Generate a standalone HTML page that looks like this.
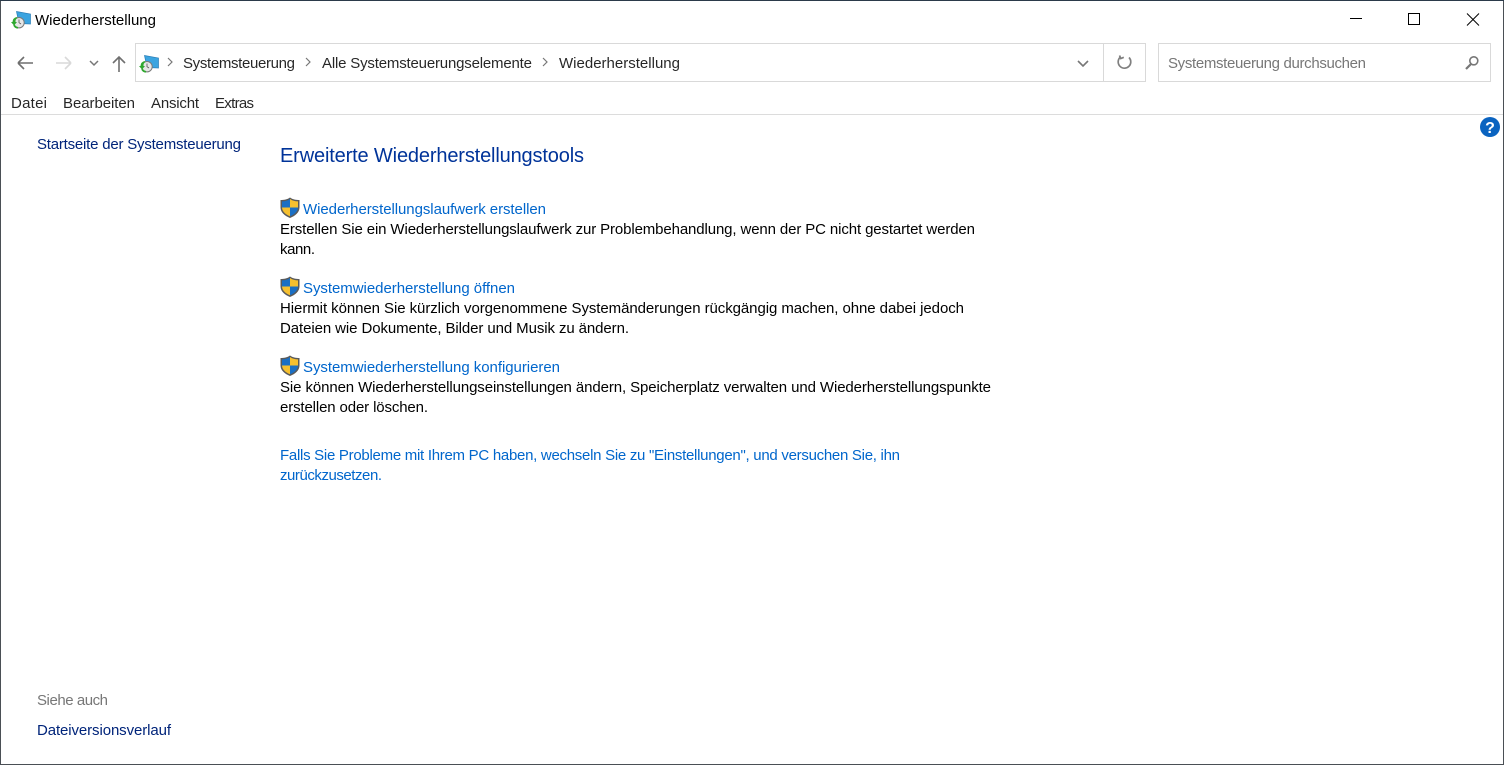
<!DOCTYPE html>
<html><head><meta charset="utf-8"><title>Wiederherstellung</title>
<style>
html,body{margin:0;padding:0;background:#fff;width:1504px;height:765px;overflow:hidden}
svg{display:block}
text{font-family:"Liberation Sans",sans-serif;font-size:15px;white-space:pre}
.k{fill:#000}.l{fill:#0066cc}.d{fill:#00247a}.g{fill:#777}
</style></head><body>
<svg width="1504" height="765" viewBox="0 0 1504 765" xmlns="http://www.w3.org/2000/svg">
<defs>
<g id="rec">
<path d="M6.500 1.500 L20.500 4 V14 L9 13.500 Z" fill="#3ba4e0" stroke="#2c7fb8" stroke-width=".7"/>
<circle cx="9" cy="12.700" r="5.200" fill="#e6e6e6" stroke="#7a7a7a"/>
<path d="M9 9.500 V12.700 L11 14" fill="none" stroke="#555" stroke-width=".8"/>
<path d="M1 12 L4 15.500 L7 12 H5.500 A4 4 0 0 1 7.500 8 L6.500 7 A5.500 5.500 0 0 0 2.500 12 Z" fill="#2fa82f"/>
<path d="M4 15 Q5 17.500 8 17.800" fill="none" stroke="#2fa82f" stroke-width="1.700"/>
</g>
<g id="sh">
<path d="M10 0.500 C7.500 2.500 4 3 .5 3 V10.500 C.5 15.500 5 19 10 21 C15 19 19.500 15.500 19.500 10.500 V3 C16 3 12.500 2.500 10 .5 Z" fill="#5a5a5a"/>
<path d="M10 2 C7.800 3.700 5 4.300 2 4.400 V10.500 H10 Z" fill="#1a6fc4"/>
<path d="M10 2 C12.200 3.700 15 4.300 18 4.400 V10.500 H10 Z" fill="#f6c02f"/>
<path d="M2 10.500 H10 V19.300 C5.700 17.500 2.200 14.700 2 10.500 Z" fill="#f6c02f"/>
<path d="M18 10.500 H10 V19.300 C14.300 17.500 17.800 14.700 18 10.500 Z" fill="#1a6fc4"/>
</g>
</defs>

<rect width="1504" height="765" fill="#fff"/>
<rect x=".5" y=".5" width="1503" height="764" fill="none" stroke="#4a4f55"/>
<rect x="0" y="0" width="1504" height="1" fill="#2b3a4a"/>

<!-- title bar -->
<use href="#rec" x="10" y="10"/>
<text x="35" y="25" class="k" textLength="121" lengthAdjust="spacing">Wiederherstellung</text>
<path d="M1350 18.500 H1362" stroke="#000" stroke-width="1"/>
<rect x="1408.500" y="13.500" width="11" height="11" fill="none" stroke="#000"/>
<path d="M1467 13.500 L1479 25.500 M1479 13.500 L1467 25.500" stroke="#000" stroke-width="1" fill="none"/>

<!-- nav -->
<path d="M18 63 H33 M18 63 L24 57 M18 63 L24 69" stroke="#6f6f6f" stroke-width="1.600" fill="none"/>
<path d="M71 63 H56 M71 63 L65 57 M71 63 L65 69" stroke="#d9d9d9" stroke-width="1.600" fill="none"/>
<path d="M90 61 L94 65 L98 61" stroke="#777" stroke-width="1.500" fill="none"/>
<path d="M119 72 V57 M113 63 L119 57 L125 63" stroke="#6f6f6f" stroke-width="1.600" fill="none"/>

<!-- address bar -->
<rect x="135.500" y="43.500" width="1010" height="38" fill="#fff" stroke="#d9d9d9"/>
<path d="M1103.500 44 V81" stroke="#d9d9d9"/>
<use href="#rec" x="138" y="54"/>
<path d="M168 58 L172 62 L168 66" stroke="#777" stroke-width="1.200" fill="none"/>
<text x="183" y="68" class="k" fill-opacity=".85" textLength="112" lengthAdjust="spacing">Systemsteuerung</text>
<path d="M306 58 L310 62 L306 66" stroke="#777" stroke-width="1.200" fill="none"/>
<text x="322" y="68" class="k" fill-opacity=".85" textLength="210" lengthAdjust="spacing">Alle Systemsteuerungselemente</text>
<path d="M543 58 L547 62 L543 66" stroke="#777" stroke-width="1.200" fill="none"/>
<text x="559" y="68" class="k" fill-opacity=".85" textLength="121" lengthAdjust="spacing">Wiederherstellung</text>
<path d="M1078 61 L1083 66 L1088 61" stroke="#777" stroke-width="1.600" fill="none"/>
<path d="M1120.500 57 A6.300 6.300 0 1 0 1129 57.500 M1119.500 55.500 L1120.800 58.500 L1123.800 57.300" fill="none" stroke="#808080" stroke-width="1.700"/>

<!-- search -->
<rect x="1158.500" y="43.500" width="332" height="38" fill="#fff" stroke="#d9d9d9"/>
<text x="1168" y="68" class="g" textLength="198" lengthAdjust="spacing">Systemsteuerung durchsuchen</text>
<circle cx="1473.800" cy="60.800" r="4" fill="none" stroke="#777" stroke-width="1.600"/>
<path d="M1471 64 L1466 69" stroke="#777" stroke-width="2.200"/>

<!-- menu -->
<text x="11" y="108" class="k" fill-opacity=".85" textLength="36" lengthAdjust="spacing">Datei</text>
<text x="63" y="108" class="k" fill-opacity=".85" textLength="72" lengthAdjust="spacing">Bearbeiten</text>
<text x="151" y="108" class="k" fill-opacity=".85" textLength="48" lengthAdjust="spacing">Ansicht</text>
<text x="215" y="108" class="k" fill-opacity=".85" textLength="39" lengthAdjust="spacing">Extras</text>
<path d="M1 114.500 H1503" stroke="#dcdcdc"/>

<!-- help -->
<circle cx="1490" cy="127" r="10" fill="#0a63c0"/>
<text x="1490" y="133" text-anchor="middle" fill="#fff" style="font-size:16px;font-weight:bold">?</text>

<!-- left -->
<text x="37" y="149" class="d" textLength="204" lengthAdjust="spacing">Startseite der Systemsteuerung</text>
<text x="37" y="705" class="g" textLength="71" lengthAdjust="spacing">Siehe auch</text>
<text x="37" y="735" class="d" textLength="134" lengthAdjust="spacing">Dateiversionsverlauf</text>

<!-- main -->
<text x="280" y="162" fill="#003399" style="font-size:20px" textLength="304" lengthAdjust="spacing">Erweiterte Wiederherstellungstools</text>

<use href="#sh" x="280" y="197"/>
<text x="303" y="214" class="l" textLength="243" lengthAdjust="spacing">Wiederherstellungslaufwerk erstellen</text>
<text x="280" y="234" class="k" textLength="695" lengthAdjust="spacing">Erstellen Sie ein Wiederherstellungslaufwerk zur Problembehandlung, wenn der PC nicht gestartet werden</text>
<text x="280" y="254" class="k" textLength="35" lengthAdjust="spacing">kann.</text>

<use href="#sh" x="280" y="276"/>
<text x="303" y="293" class="l" textLength="212" lengthAdjust="spacing">Systemwiederherstellung öffnen</text>
<text x="280" y="313" class="k" textLength="684" lengthAdjust="spacing">Hiermit können Sie kürzlich vorgenommene Systemänderungen rückgängig machen, ohne dabei jedoch</text>
<text x="280" y="333" class="k" textLength="349" lengthAdjust="spacing">Dateien wie Dokumente, Bilder und Musik zu ändern.</text>

<use href="#sh" x="280" y="355"/>
<text x="303" y="372" class="l" textLength="257" lengthAdjust="spacing">Systemwiederherstellung konfigurieren</text>
<text x="280" y="392" class="k" textLength="711" lengthAdjust="spacing">Sie können Wiederherstellungseinstellungen ändern, Speicherplatz verwalten und Wiederherstellungspunkte</text>
<text x="280" y="412" class="k" textLength="148" lengthAdjust="spacing">erstellen oder löschen.</text>

<text x="280" y="460" class="l" textLength="620" lengthAdjust="spacing">Falls Sie Probleme mit Ihrem PC haben, wechseln Sie zu "Einstellungen", und versuchen Sie, ihn</text>
<text x="280" y="480" class="l" textLength="102" lengthAdjust="spacing">zurückzusetzen.</text>
</svg>
</body></html>
